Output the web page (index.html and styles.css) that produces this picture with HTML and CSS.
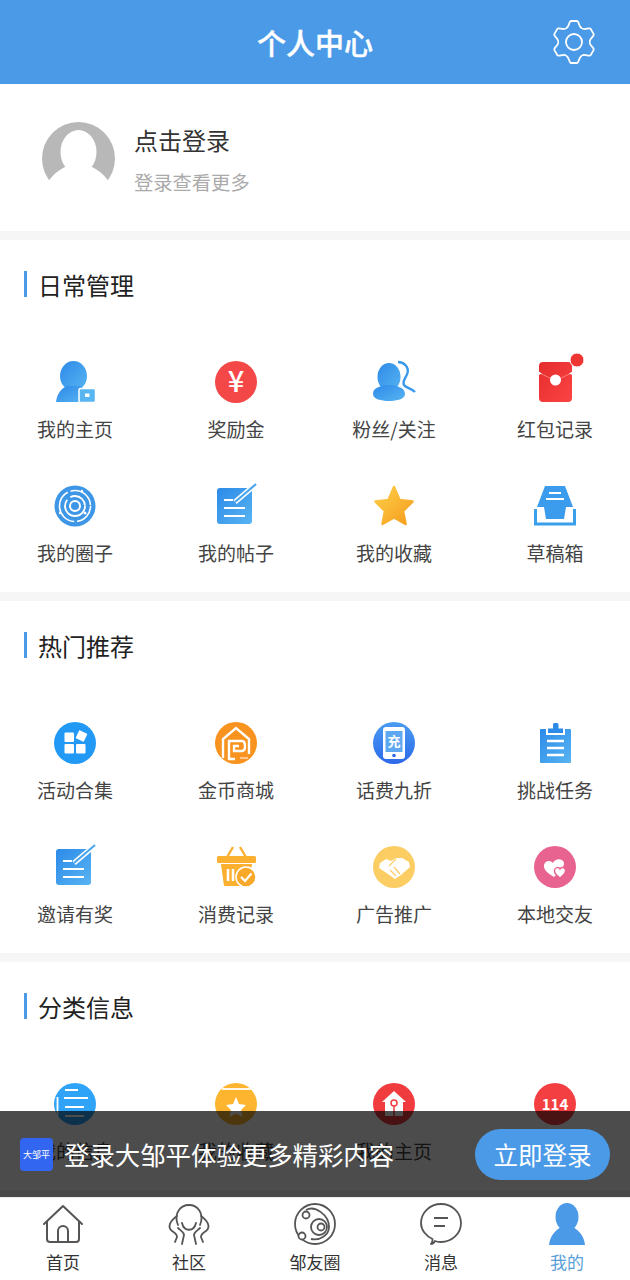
FILE: index.html
```html
<!DOCTYPE html>
<html lang="zh-CN">

<head>
    <meta charset="UTF-8" />
    <meta name="viewport" content="width=device-width, initial-scale=1.0" />
    <title>个人中心</title>
    <link rel="stylesheet" href="styles.css">
</head>

<body>
    <svg class="svg-defs" aria-hidden="true">
        <defs>
            <linearGradient id="blue" x1="0" y1="0" x2="1" y2="1">
                <stop offset="0" stop-color="#2c8ae8" />
                <stop offset="1" stop-color="#58b4f2" />
            </linearGradient>
            <linearGradient id="red" x1="0" y1="0" x2="1" y2="1">
                <stop offset="0" stop-color="#e62c2c" />
                <stop offset="1" stop-color="#fb4444" />
            </linearGradient>
            <linearGradient id="gold" x1="0" y1="0" x2="1" y2="1">
                <stop offset="0" stop-color="#fdd04a" />
                <stop offset="1" stop-color="#f59c1c" />
            </linearGradient>
            <linearGradient id="phone" x1="0" y1="0" x2="0" y2="1">
                <stop offset="0" stop-color="#4a9cf2" />
                <stop offset="1" stop-color="#2c68ea" />
            </linearGradient>
            <symbol id="note" viewBox="0 0 42 42" overflow="visible">
                <rect x="2" y="3" width="35" height="36" rx="3" fill="url(#blue)" />
                <path d="M9 15H18M9 23H30M9 31H30" stroke="#fff" stroke-width="2.2" fill="none" />
                <path d="M20 17L40 0" stroke="#fff" stroke-width="5" />
                <path d="M20 17L41 -1" stroke="#4ba6ee" stroke-width="2.2" />
            </symbol>
        </defs>
    </svg>

    <div class="page">
        <header class="top-bar">
            <h1 class="top-title">个人中心</h1>
            <svg class="gear" viewBox="0 0 44 44" fill="none" stroke="#fff" stroke-width="1.8">
                <path id="gear-tooth" d="M14 8.14C17 8.14 17 1 19 1H25C27 1 27 8.14 30 8.14" />
                <use href="#gear-tooth" transform="rotate(60 22 22)" />
                <use href="#gear-tooth" transform="rotate(120 22 22)" />
                <use href="#gear-tooth" transform="rotate(180 22 22)" />
                <use href="#gear-tooth" transform="rotate(240 22 22)" />
                <use href="#gear-tooth" transform="rotate(300 22 22)" />
                <circle cx="22" cy="22" r="8" />
            </svg>
        </header>

        <main class="content">
            <section class="profile">
                <svg class="avatar" viewBox="0 0 73 73">
                    <circle cx="36.5" cy="36.5" r="36.5" fill="#b8b8b8" />
                    <ellipse cx="36.5" cy="30" rx="18" ry="22" fill="#fff" />
                    <path d="M6 60C12 50 22 45 29 42H44C51 45 61 50 67 60V74H6Z" fill="#fff" />
                </svg>
                <div>
                    <div class="profile-name">点击登录</div>
                    <div class="profile-sub">登录查看更多</div>
                </div>
            </section>

            <section class="group">
                <h2 class="group-title">日常管理</h2>
                <div class="grid">
                    <div class="item">
                        <svg class="icon" viewBox="0 0 42 42">
                            <ellipse cx="19.5" cy="15" rx="13.5" ry="15" fill="url(#blue)" />
                            <path d="M2 41C3 32 8 27 13 25H26C30 27 33 31 34 41Z" fill="url(#blue)" />
                            <rect x="25" y="27.5" width="16.5" height="14" rx="1.5" fill="#58b6f2" stroke="#fff" stroke-width="1.5" />
                            <rect x="31" y="32.5" width="4.5" height="3.5" fill="#fff" />
                        </svg>
                        <span class="item-label">我的主页</span>
                    </div>
                    <div class="item">
                        <svg class="icon" viewBox="0 0 42 42">
                            <circle cx="21" cy="21" r="21" fill="#f44848" />
                            <text class="icon-text" x="21" y="31" font-size="29" font-weight="500" text-anchor="middle" fill="#fff">¥</text>
                        </svg>
                        <span class="item-label">奖励金</span>
                    </div>
                    <div class="item">
                        <svg class="icon" viewBox="0 0 42 42">
                            <path d="M25 1C31 1 36 6 34.5 12C33 17 29 20 31 24C33 27 38 27 42 31" fill="none" stroke="#3a98ea" stroke-width="2.4" />
                            <ellipse cx="16" cy="16" rx="11.5" ry="14" fill="url(#blue)" />
                            <path d="M0 33C0 27 6 26 11 24H21C26 26 32 27 32 33C32 38 24 40 16 40C8 40 0 38 0 33Z" fill="url(#blue)" />
                        </svg>
                        <span class="item-label">粉丝/关注</span>
                    </div>
                    <div class="item">
                        <svg class="icon" viewBox="0 0 42 42">
                            <rect x="5" y="1" width="33" height="40" rx="4" fill="url(#red)" />
                            <path d="M5 12C11 14 16 18 21.5 19C27 18 32 14 38 12" fill="none" stroke="#ff8080" stroke-width="1" />
                            <path d="M4.5 10.5L8 12.5L4.5 14ZM38.5 10.5L35 12.5L38.5 14Z" fill="#fff" />
                            <circle cx="21.5" cy="19" r="5.5" fill="#fff" />
                            <circle cx="43" cy="-1" r="7" fill="#f03535" stroke="#fff" stroke-width="1" />
                        </svg>
                        <span class="item-label">红包记录</span>
                    </div>
                    <div class="item">
                        <svg class="icon" viewBox="0 0 42 42" fill="none" stroke="#fff">
                            <circle cx="21" cy="21" r="20.5" fill="#3d96e6" stroke="none" />
                            <circle cx="21" cy="21" r="15.5" stroke-width="1.6" stroke-dasharray="22 3 40 3 28 4" />
                            <circle cx="21" cy="21" r="10" stroke-width="1.8" stroke-dasharray="38 4 20 2" />
                            <circle cx="21" cy="21" r="5" stroke-width="2" />
                            <circle cx="28" cy="6" r="1.2" fill="#fff" stroke="none" />
                            <circle cx="6" cy="28" r="1.2" fill="#fff" stroke="none" />
                            <circle cx="31" cy="28" r="1.5" fill="#fff" stroke="none" />
                        </svg>
                        <span class="item-label">我的圈子</span>
                    </div>
                    <div class="item">
                        <svg class="icon" viewBox="0 0 42 42"><use href="#note" /></svg>
                        <span class="item-label">我的帖子</span>
                    </div>
                    <div class="item">
                        <svg class="icon" viewBox="0 0 42 42">
                            <path d="M21 2L26.5 15L39.5 16.5L30 26L32.5 39L21 32.5L9.5 39L12 26L2.5 16.5L15.5 15Z" fill="url(#gold)" stroke="url(#gold)" stroke-width="2.5" stroke-linejoin="round" />
                        </svg>
                        <span class="item-label">我的收藏</span>
                    </div>
                    <div class="item">
                        <svg class="icon" viewBox="0 0 42 42">
                            <path d="M11 1H31L39 22H32L30 34H12L10 22H3Z" fill="#3b9bec" />
                            <path d="M15 8H27M12 14H30" stroke="#fff" stroke-width="2" />
                            <path d="M1.5 24V39H40.5V24" fill="none" stroke="#3ba0ec" stroke-width="3" />
                        </svg>
                        <span class="item-label">草稿箱</span>
                    </div>
                </div>
            </section>

            <section class="group">
                <h2 class="group-title">热门推荐</h2>
                <div class="grid">
                    <div class="item">
                        <svg class="icon" viewBox="0 0 42 42">
                            <circle cx="21" cy="21" r="21" fill="#2299f5" />
                            <rect x="10.5" y="10.5" width="9.5" height="9.5" rx="1" fill="#fff" />
                            <rect x="10.5" y="22" width="9.5" height="9.5" rx="1" fill="#fff" />
                            <rect x="22" y="22" width="9.5" height="9.5" rx="1" fill="#fff" />
                            <rect x="23" y="9.5" width="9" height="9" rx="1" fill="#fff" transform="rotate(25 27.5 14)" />
                        </svg>
                        <span class="item-label">活动合集</span>
                    </div>
                    <div class="item">
                        <svg class="icon" viewBox="0 0 42 42" fill="none" stroke="#fff" stroke-width="2.4">
                            <circle cx="21" cy="21" r="21" fill="#f7931e" stroke="none" />
                            <path d="M8 36V17L21 6L34 17V32" />
                            <path d="M20 37H14V19H27C31 19 31 29 27 29H19V24H24" />
                            <path d="M25 36H33" stroke-width="1" />
                        </svg>
                        <span class="item-label">金币商城</span>
                    </div>
                    <div class="item">
                        <svg class="icon" viewBox="0 0 42 42">
                            <circle cx="21" cy="21" r="21" fill="url(#phone)" />
                            <rect x="10" y="5" width="22" height="32" rx="3" fill="#fff" />
                            <rect x="12.5" y="9" width="17" height="21" fill="#5ea8f2" />
                            <text class="icon-text" x="21" y="24" font-size="13" font-weight="700" text-anchor="middle" fill="#fff">充</text>
                            <circle cx="21" cy="33.5" r="1.8" fill="#2c68ea" />
                        </svg>
                        <span class="item-label">话费九折</span>
                    </div>
                    <div class="item">
                        <svg class="icon" viewBox="0 0 42 42">
                            <rect x="6" y="7" width="31" height="34" rx="1" fill="url(#blue)" />
                            <rect x="12" y="5" width="19" height="8" fill="#fff" />
                            <rect x="19" y="1" width="5.5" height="7" rx="1.5" fill="#2c8ae8" />
                            <rect x="14" y="6.5" width="15" height="4.5" fill="#2c8ae8" />
                            <path d="M13 19H30M13 26H30M13 33H30" stroke="#fff" stroke-width="2.5" />
                        </svg>
                        <span class="item-label">挑战任务</span>
                    </div>
                    <div class="item">
                        <svg class="icon" viewBox="0 0 42 42"><use href="#note" /></svg>
                        <span class="item-label">邀请有奖</span>
                    </div>
                    <div class="item">
                        <svg class="icon" viewBox="0 0 42 42">
                            <path d="M11 13L18 1M32 13L25 1" stroke="#fbb030" stroke-width="2.4" fill="none" />
                            <rect x="2" y="10" width="39" height="7" rx="1.5" fill="#fbb030" />
                            <path d="M6 18H37L34 40H9Z" fill="#fbb030" />
                            <path d="M13 23V35M18 23V35" stroke="#fff" stroke-width="2.5" />
                            <circle cx="31" cy="31" r="10" fill="#f9a92a" stroke="#fff" stroke-width="1.5" />
                            <path d="M26 31L30 35L36.5 27.5" stroke="#fff" stroke-width="2.2" fill="none" />
                        </svg>
                        <span class="item-label">消费记录</span>
                    </div>
                    <div class="item">
                        <svg class="icon" viewBox="0 0 42 42">
                            <circle cx="21" cy="21" r="21" fill="#fbcd63" />
                            <path d="M7 17L13 13L18 15L23 12H29L36 16L37 21L28 29L22 33L15 28L6 22Z" fill="#fff" />
                            <path d="M23 13L16 20M21 21L27 28M17 24L23 30" stroke="#fbcd63" stroke-width="1.2" fill="none" />
                        </svg>
                        <span class="item-label">广告推广</span>
                    </div>
                    <div class="item">
                        <svg class="icon" viewBox="0 0 42 42">
                            <circle cx="21" cy="21" r="21" fill="#e8638f" />
                            <path d="M20 31C15 28 9 24 10 19C11 14 17 14 19 17C21 12 29 12 30 17C30.5 20 26 26 20 31Z" fill="#fff" />
                            <path d="M26 32C23 30 20 27 20.5 24C21 21 25 21 26 23C27 21 31 21 31.5 24C32 27 29 30 26 32Z" fill="#fff" stroke="#e8638f" stroke-width="1.5" />
                        </svg>
                        <span class="item-label">本地交友</span>
                    </div>
                </div>
            </section>

            <section class="group">
                <h2 class="group-title">分类信息</h2>
                <div class="grid">
                    <div class="item">
                        <svg class="icon" viewBox="0 0 42 42" fill="none" stroke="#fff" stroke-width="1.8">
                            <circle cx="21" cy="21" r="21" fill="#2ea3f8" stroke="none" />
                            <path d="M11 7H24M10 15H34M11 24H30M11 33H30M3.5 14V34" />
                        </svg>
                        <span class="item-label">我的信息</span>
                    </div>
                    <div class="item">
                        <svg class="icon" viewBox="0 0 42 42">
                            <circle cx="21" cy="21" r="21" fill="#fdb52f" />
                            <path d="M7 6H36" stroke="#fff" stroke-width="1.8" />
                            <path d="M21 14L24 21L31 22L26 27L27.5 34L21 30.5L14.5 34L16 27L11 22L18 21Z" fill="#fff" />
                        </svg>
                        <span class="item-label">我的收藏</span>
                    </div>
                    <div class="item">
                        <svg class="icon" viewBox="0 0 42 42">
                            <circle cx="21" cy="21" r="21" fill="#f03c3f" />
                            <path d="M21 8L33 19H30V33H12V19H9Z" fill="#fff" />
                            <circle cx="21" cy="20" r="3" fill="none" stroke="#f03c3f" stroke-width="1.5" />
                            <path d="M21 23V33" stroke="#f03c3f" stroke-width="1.5" />
                        </svg>
                        <span class="item-label">我的主页</span>
                    </div>
                    <div class="item">
                        <svg class="icon" viewBox="0 0 42 42">
                            <circle cx="21" cy="21" r="21" fill="#f43f42" />
                            <text class="icon-text" x="21" y="26.5" font-size="15" font-weight="700" text-anchor="middle" fill="#fff">114</text>
                        </svg>
                        <span class="item-label">便民电话</span>
                    </div>
                </div>
            </section>
        </main>

        <div class="login-tip">
            <div class="tip-logo">大邹平</div>
            <span class="tip-text">登录大邹平体验更多精彩内容</span>
            <button class="tip-btn">立即登录</button>
        </div>

        <nav class="tab-bar">
            <div class="tab">
                <svg class="tab-icon" viewBox="0 0 42 42" fill="none" stroke="#555" stroke-width="2">
                    <path d="M2 21L21 3L40 21" stroke-linejoin="round" stroke-linecap="round" />
                    <path d="M5 18V36A3 3 0 0 0 8 39H34A3 3 0 0 0 37 36V18" />
                    <path d="M16 39V28A5 5 0 0 1 26 28V39" />
                </svg>
                <span class="tab-label">首页</span>
            </div>
            <div class="tab">
                <svg class="tab-icon" viewBox="0 0 42 42" fill="none" stroke="#555" stroke-width="1.8" stroke-linecap="round">
                    <path d="M10 22C5 10 13 2 21 2C29 2 37 10 32 22" />
                    <path d="M14 20C16 29 26 29 28 20" />
                    <path d="M9 13C2 18 -1 24 4 28C7 30 9 31 9 34L7 39" />
                    <path d="M33 13C40 18 43 24 38 28C35 30 33 31 33 34L35 39" />
                    <path d="M10 25C13 28 16 29 16 32L14 41M32 25C29 28 26 29 26 32L28 41" />
                </svg>
                <span class="tab-label">社区</span>
            </div>
            <div class="tab">
                <svg class="tab-icon" viewBox="0 0 42 42" fill="none" stroke="#555" stroke-width="1.8">
                    <circle cx="21" cy="21" r="20" />
                    <path d="M12 7C21 2 35 12 35 24C35 32 26 38 17 36" />
                    <circle cx="25" cy="24" r="8" />
                    <circle cx="27" cy="24" r="3.5" />
                    <circle cx="12" cy="12" r="3.5" fill="#fff" />
                    <circle cx="8" cy="33" r="3.5" fill="#fff" />
                </svg>
                <span class="tab-label">邹友圈</span>
            </div>
            <div class="tab">
                <svg class="tab-icon" viewBox="0 0 42 42" fill="none" stroke="#555" stroke-width="1.8">
                    <path d="M11 41C12 39 13 38 12.5 36C6 33 1 27 1 20A20 19 0 1 1 21 39C18 39 16 38.5 15 38C14 40 12.5 41 11 41Z" stroke-linejoin="round" />
                    <path d="M14 15H28M14 23H25" stroke-width="2" />
                </svg>
                <span class="tab-label">消息</span>
            </div>
            <div class="tab tab-active">
                <svg class="tab-icon" viewBox="0 0 42 42" fill="#4a9ae8">
                    <ellipse cx="21" cy="14" rx="11.5" ry="14" />
                    <path d="M3 42C4 32 10 27 15 24H27C32 27 38 32 39 42Z" />
                </svg>
                <span class="tab-label">我的</span>
            </div>
        </nav>
    </div>
</body>

</html>
```

FILE: styles.css
```css
* {
    box-sizing: border-box;
}

body {
    margin: 0;
    font-family: "Noto Sans CJK SC", "Noto Sans", sans-serif;
    background: #f6f6f6;
}

.svg-defs {
    display: block;
    width: 0;
    height: 0;
}

.page {
    position: relative;
    display: flex;
    flex-direction: column;
    height: 1280px;
    overflow: hidden;
}

.top-bar {
    display: flex;
    align-items: center;
    justify-content: center;
    position: relative;
    flex: none;
    height: 84px;
    background: #4a9ae8;
}

.top-title {
    margin: 0;
    font-size: 29px;
    font-weight: 500;
    line-height: 40px;
    color: #fff;
    -webkit-text-stroke: 0.4px #fff;
}

.gear {
    position: absolute;
    top: 20px;
    right: 34px;
    width: 44px;
    height: 44px;
}

.content {
    flex: 1;
    min-height: 0;
    overflow: hidden;
}

.profile {
    display: flex;
    align-items: center;
    gap: 19px;
    height: 147px;
    padding: 6px 0 3px 42px;
    background: #fff;
}

.avatar {
    width: 73px;
    height: 73px;
    margin-top: -2px;
}

.profile-name {
    font-size: 24px;
    line-height: 34px;
    color: #333;
}

.profile-sub {
    margin-top: 11px;
    font-size: 19.3px;
    line-height: 28px;
    color: #aaa;
}

.group {
    margin-top: 9px;
    padding: 31px 0 26.5px;
    background: #fff;
}

.group-title {
    height: 26px;
    margin: 0 0 64px 24px;
    padding-left: 11px;
    border-left: 3px solid #4a9ae8;
    font-size: 24px;
    font-weight: 400;
    line-height: 28px;
    color: #222;
}

.grid {
    display: grid;
    grid-template-columns: 160px 162px 154px 168px;
    row-gap: 42.5px;
    margin-left: -5px;
}

.item {
    display: flex;
    flex-direction: column;
    align-items: center;
}

.icon {
    width: 42px;
    height: 42px;
    overflow: visible;
}

.icon-text {
    font-family: "Noto Sans CJK SC", sans-serif;
}

.item-label {
    margin-top: 13px;
    font-size: 19px;
    line-height: 26px;
    color: #444;
    white-space: nowrap;
}

.login-tip {
    position: absolute;
    left: 0;
    right: 0;
    bottom: 83px;
    display: flex;
    align-items: center;
    height: 86px;
    padding: 0 20px;
    background: rgba(0, 0, 0, 0.7);
}

.tip-logo {
    flex: none;
    width: 33px;
    height: 33px;
    margin-right: 11px;
    border-radius: 4px;
    background: #3366f0;
    font-size: 9px;
    line-height: 33px;
    text-align: center;
    color: #fff;
}

.tip-text {
    font-size: 25.4px;
    line-height: 36px;
    color: #fff;
    white-space: nowrap;
}

.tip-btn {
    width: 135px;
    height: 51px;
    margin-left: auto;
    padding: 0;
    border: none;
    border-radius: 26px;
    background: #4a9ae8;
    font-family: inherit;
    font-size: 24.5px;
    color: #fff;
}

.tab-bar {
    display: flex;
    flex: none;
    height: 83px;
    padding-top: 5px;
    border-top: 1px solid #eee;
    background: #fff;
}

.tab {
    display: flex;
    flex: 1;
    flex-direction: column;
    align-items: center;
}

.tab-icon {
    width: 42px;
    height: 42px;
    overflow: visible;
}

.tab-label {
    margin-top: 5px;
    font-size: 17px;
    line-height: 24px;
    color: #333;
}

.tab-active .tab-label {
    color: #5a9fd8;
}
```
